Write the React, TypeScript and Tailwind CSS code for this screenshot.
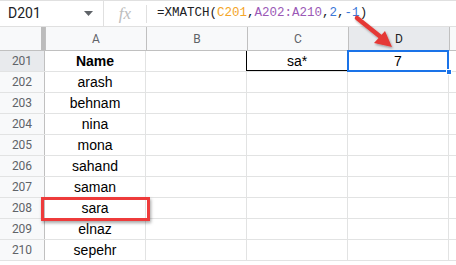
import React from "react";

const rows = [
  { n: 201, a: "Name", c: "sa*", d: "7" },
  { n: 202, a: "arash" },
  { n: 203, a: "behnam" },
  { n: 204, a: "nina" },
  { n: 205, a: "mona" },
  { n: 206, a: "sahand" },
  { n: 207, a: "saman" },
  { n: 208, a: "sara" },
  { n: 209, a: "elnaz" },
  { n: 210, a: "sepehr" },
];

const cols = ["A", "B", "C", "D"];

export default function App() {
  return (
    <div className="relative w-[456px] h-[265px] overflow-hidden bg-white font-['Liberation_Sans',Arial,sans-serif]">
      {/* Formula bar */}
      <div className="flex items-center h-[27px] border-t border-b border-[#e0e0e0] bg-white">
        <div className="w-[104px] flex items-center justify-between pl-[8px] pr-[8px] h-full border-r border-[#e0e0e0] font-['Roboto',sans-serif] text-[14px] text-[#202124]">
          <span>D201</span>
          <svg width="9" height="5" viewBox="0 0 9 5" className="mr-[2px]">
            <path d="M0 0 L9 0 L4.5 5 Z" fill="#5f6368" />
          </svg>
        </div>
        <div className="w-[43px] h-[18px] flex items-center justify-center border-r border-[#e0e0e0] font-['Liberation_Serif',serif] italic text-[17px] text-[#bdbdbd]">
          fx
        </div>
        <div className="pl-[10px] font-['Liberation_Mono',monospace] text-[12.5px] text-[#202124] tracking-[0px]">
          =XMATCH(<span className="text-[#f4a62a]">C201</span>,<span className="text-[#9b59b6]">A202:A210</span>,<span className="text-[#3c78d8]">2</span>,<span className="text-[#3c78d8]">-1</span>)
        </div>
      </div>

      {/* Column headers */}
      <div className="flex h-[24px] bg-[#f8f9fa] border-b border-[#c0c0c0] font-['Roboto',sans-serif] text-[12px] text-[#5f6368]">
        <div className="w-[45px] h-full flex justify-end">
          <div className="w-[4px] h-full bg-[#bcbcbc]" />
        </div>
        {cols.map((c) => (
          <div
            key={c}
            className={
              "w-[101px] h-full flex items-center justify-center border-l border-[#c0c0c0] " +
              (c === "D" ? "bg-[#e8eaed] text-[#202124]" : "")
            }
          >
            {c}
          </div>
        ))}
        <div className="flex-1 h-full border-l border-[#c0c0c0]" />
      </div>

      {/* Rows */}
      {rows.map((r) => (
        <div key={r.n} className="flex h-[21px] border-b border-[#e2e3e3] text-[14px] text-[#000]">
          <div
            className={
              "w-[45px] h-full flex items-center justify-center border-r border-[#c0c0c0] font-['Roboto',sans-serif] text-[12px] text-[#5f6368] " +
              (r.n === 201 ? "bg-[#e8eaed]" : "bg-[#f8f9fa]")
            }
          >
            {r.n}
          </div>
          <div className={"w-[101px] h-full flex items-center justify-center border-r border-[#e2e3e3] " + (r.n === 201 ? "font-bold" : "")}>
            {r.a}
          </div>
          <div className="w-[101px] h-full border-r border-[#e2e3e3]" />
          <div
            className={
              "w-[101px] h-full flex items-center justify-center border-r " +
              (r.n === 201 ? "border-[#000] border-l border-l-black -ml-[1px] w-[102px] shadow-[inset_0_-1px_0_#000]" : "border-[#e2e3e3]")
            }
          >
            {r.c}
          </div>
          <div
            className={
              "w-[101px] h-full flex items-center justify-center border-r border-[#e2e3e3] " +
              (r.n === 201 ? "relative" : "")
            }
          >
            {r.d}
            {r.n === 201 && (
              <>
                <div className="absolute -left-[1px] -top-[1px] -right-[1px] -bottom-[1px] border-2 border-[#1a73e8]" />
                <div className="absolute -right-[4px] -bottom-[4px] w-[6px] h-[6px] bg-[#1a73e8] border border-white" />
              </>
            )}
          </div>
          <div className="flex-1 h-full" />
        </div>
      ))}

      {/* Red highlight around sara */}
      <div className="absolute left-[41px] top-[197px] w-[109px] h-[24px] border-[3px] border-[#ee3b3b] shadow-[1px_2px_3px_rgba(0,0,0,0.35)]" />

      {/* Red arrow */}
      <svg className="absolute left-[350px] top-[12px]" width="50" height="42" viewBox="0 0 50 42">
        <defs>
          <filter id="sh" x="-20%" y="-20%" width="150%" height="150%">
            <feDropShadow dx="1" dy="1.5" stdDeviation="1.2" floodColor="#000" floodOpacity="0.35" />
          </filter>
        </defs>
        <g filter="url(#sh)">
          <line x1="7" y1="6" x2="32" y2="26" stroke="#e53935" strokeWidth="4.5" strokeLinecap="round" />
          <path d="M42 35 L24 31 L35 19 Z" fill="#e53935" />
        </g>
      </svg>
    </div>
  );
}
